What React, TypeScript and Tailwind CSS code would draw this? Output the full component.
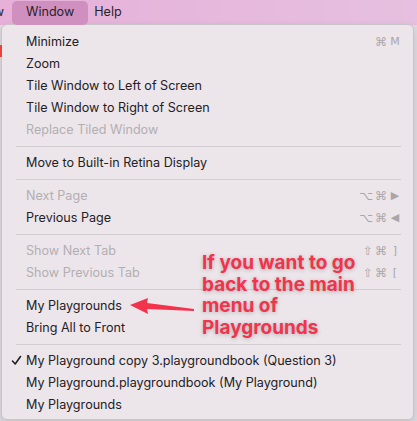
import React from "react";

type Row =
  | { kind: "sep" }
  | { kind: "item"; label: string; disabled?: boolean; checked?: boolean; mods?: string; keyGlyph?: string };

const rows: Row[] = [
  { kind: "item", label: "Minimize", mods: "⌘", keyGlyph: "M" },
  { kind: "item", label: "Zoom" },
  { kind: "item", label: "Tile Window to Left of Screen" },
  { kind: "item", label: "Tile Window to Right of Screen" },
  { kind: "item", label: "Replace Tiled Window", disabled: true },
  { kind: "sep" },
  { kind: "item", label: "Move to Built-in Retina Display" },
  { kind: "sep" },
  { kind: "item", label: "Next Page", disabled: true, mods: "⌥⌘", keyGlyph: "▶" },
  { kind: "item", label: "Previous Page", mods: "⌥⌘", keyGlyph: "◀" },
  { kind: "sep" },
  { kind: "item", label: "Show Next Tab", disabled: true, mods: "⇧⌘", keyGlyph: "]" },
  { kind: "item", label: "Show Previous Tab", disabled: true, mods: "⇧⌘", keyGlyph: "[" },
  { kind: "sep" },
  { kind: "item", label: "My Playgrounds" },
  { kind: "item", label: "Bring All to Front" },
  { kind: "sep" },
  { kind: "item", label: "My Playground copy 3.playgroundbook (Question 3)", checked: true },
  { kind: "item", label: "My Playground.playgroundbook (My Playground)" },
  { kind: "item", label: "My Playgrounds" },
];

function MenuRow({ row }: { row: Row }) {
  if (row.kind === "sep") {
    return (
      <div className="h-[11px] flex items-center pl-[14px] pr-[12px]">
        <div className="h-px w-full bg-[#d2cdd1]" />
      </div>
    );
  }
  return (
    <div
      className={`relative h-[22px] flex items-center pl-[24px] pr-[12px] ${
        row.disabled ? "text-[#b3aeb2]" : "text-[#242124]"
      }`}
    >
      {row.checked && (
        <span className="absolute left-[9px] top-[5px] leading-none">
          <svg width="11" height="11" viewBox="0 0 11 11">
            <path d="M1.5 6 L4.2 9 L9.5 1.5" fill="none" stroke="#242124" strokeWidth="1.6" strokeLinecap="round" strokeLinejoin="round" />
          </svg>
        </span>
      )}
      <span className="flex-1 truncate">{row.label}</span>
      {row.mods && (
        <span className="flex items-center text-[12px] text-[#aaa5a9] font-['DejaVu_Sans',sans-serif]">
          <span className="tracking-[2px]">{row.mods}</span>
          <span className="w-[12px] text-center text-[11px]">{row.keyGlyph}</span>
        </span>
      )}
    </div>
  );
}

export default function App() {
  return (
    <div className="w-[417px] h-[421px] relative overflow-hidden bg-[#dedbe0] font-['Inter',sans-serif] text-[12.6px]">
      {/* menu bar */}
      <div className="h-[25px] flex items-center bg-gradient-to-r from-[#e6b0d9] to-[#e6c0e0] text-[#2a1f29]">
        <span className="-ml-[36px] w-[40px] text-right">View</span>
        <span className="ml-[8px] h-[24px] px-[14px] flex items-center rounded-[5px] bg-[#cf90bf]">Window</span>
        <span className="ml-[6px]">Help</span>
      </div>

      <div className="absolute left-0 top-[45px] w-[2px] h-[12px] bg-[#e8423a]" />

      {/* dropdown */}
      <div className="ml-[1px] w-[413px] rounded-[6px] -mt-px bg-[#ece6eb] border border-[#c9c4c8] pt-[6px] pb-[3px] shadow-[0_4px_10px_rgba(0,0,0,0.12)]">
        {rows.map((r, i) => (
          <MenuRow key={i} row={r} />
        ))}
      </div>

      {/* annotation */}
      <div className="absolute left-[202px] top-[252px] font-['Inter',sans-serif] font-bold text-[19px] leading-[21.5px] text-[#f2334b] [text-shadow:0_1px_4px_rgba(0,0,0,0.25)]">
        If you want to go
        <br />
        back to the main
        <br />
        menu of
        <br />
        Playgrounds
      </div>
      <svg className="absolute left-[126px] top-[294px]" width="72" height="24" viewBox="0 0 72 24">
        <path d="M4 11 L22 4 L21 9 L68 15 L68 17 L21 15 L22 20 Z" fill="#f2334b" />
      </svg>
    </div>
  );
}
